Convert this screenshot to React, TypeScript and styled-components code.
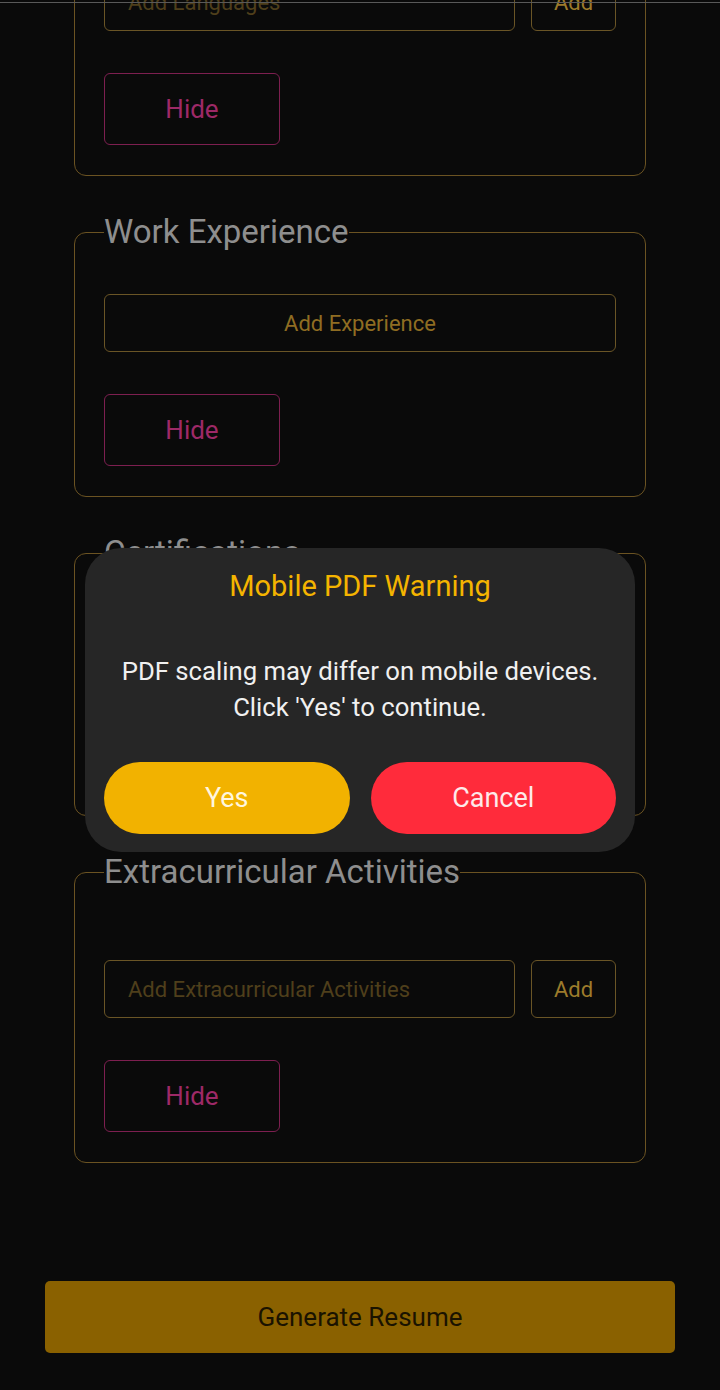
import React from "react";
import styled, { createGlobalStyle } from "styled-components";

const GlobalStyle = createGlobalStyle`
  html, body {
    margin: 0;
    padding: 0;
    background: #0a0a0a;
  }
  body {
    font-family: Roboto, "Noto Sans", "Liberation Sans", Arial, sans-serif;
    overflow: hidden;
  }
  *, *::before, *::after { box-sizing: border-box; }
`;

const TopEdge = styled.div`
  position: fixed;
  top: 2px;
  left: 0;
  right: 0;
  height: 1px;
  background: #595959;
  z-index: 5;
`;

const Page = styled.main`
  margin-top: -134px;
  padding: 0 45px 40px;
  display: flex;
  flex-direction: column;
`;

const Sections = styled.div`
  display: flex;
  flex-direction: column;
  gap: 37px;
  margin: 0 29px;
`;

const Section = styled.fieldset<{ $lead: number }>`
  margin: 0;
  min-width: 0;
  border: 1px solid #6b5322;
  border-radius: 12px;
  padding: ${(p) => p.$lead}px 29px 30px;
  display: flex;
  flex-direction: column;
  align-items: flex-start;
  gap: 42px;
`;

const Legend = styled.legend`
  padding: 0;
  margin: 0;
  font-size: 33px;
  line-height: 38px;
  color: #8e8e8e;
`;

const Row = styled.div`
  display: flex;
  gap: 16px;
  width: 100%;
`;

const TextInput = styled.input`
  flex: 1;
  min-width: 0;
  height: 58px;
  border: 1px solid #6a5526;
  border-radius: 6px;
  background: transparent;
  padding: 0 23px;
  font-family: inherit;
  font-size: 22px;
  color: #9c7b2b;
  outline: none;
  &::placeholder {
    color: #4f3f1b;
  }
`;

const OutlineButton = styled.button<{ $wide?: boolean }>`
  width: ${(p) => (p.$wide ? "100%" : "85px")};
  height: 58px;
  border: 1px solid #6a5526;
  border-radius: 6px;
  background: transparent;
  font-family: inherit;
  font-size: 22px;
  color: ${(p) => (p.$wide ? "#8f6d22" : "#9c7b2b")};
  padding: 0;
`;

const HideButton = styled.button`
  width: 176px;
  height: 72px;
  border: 1px solid #7d1f50;
  border-radius: 6px;
  background: transparent;
  font-family: inherit;
  font-size: 26px;
  color: #9e2967;
  padding: 0;
`;

const GenerateButton = styled.button`
  margin-top: 118px;
  height: 72px;
  width: 100%;
  border: none;
  border-radius: 5px;
  background: #8a6100;
  font-family: inherit;
  font-size: 26px;
  color: #1a1300;
`;

const Backdrop = styled.div`
  position: fixed;
  inset: 0;
  display: flex;
  align-items: center;
  justify-content: center;
  padding-top: 10px;
  z-index: 10;
`;

const Dialog = styled.div`
  width: 550px;
  background: #262626;
  border-radius: 36px;
  padding: 22px 19px 18px;
  text-align: center;
`;

const DialogTitle = styled.h2`
  margin: 0;
  font-size: 29px;
  line-height: 32px;
  font-weight: 400;
  color: #f4b400;
`;

const DialogText = styled.p`
  margin: 51px 0 37px;
  font-size: 25.7px;
  line-height: 36px;
  color: #f0f0f0;
`;

const Actions = styled.div`
  display: flex;
  gap: 21px;
`;

const ActionButton = styled.button<{ $variant: "confirm" | "cancel" }>`
  flex: 1;
  height: 72px;
  border: none;
  border-radius: 36px;
  font-family: inherit;
  font-size: 27px;
  background: ${(p) => (p.$variant === "confirm" ? "#f2b200" : "#ff2b3b")};
  color: ${(p) => (p.$variant === "confirm" ? "#fff6df" : "#fdeaea")};
`;

type SectionData = {
  title: string;
  lead: number;
  kind: "input" | "button";
  label: string;
};

const sections: SectionData[] = [
  { title: "Languages", lead: 69, kind: "input", label: "Add Languages" },
  { title: "Work Experience", lead: 43, kind: "button", label: "Add Experience" },
  { title: "Certifications", lead: 41, kind: "button", label: "Add Certification" },
  {
    title: "Extracurricular Activities",
    lead: 69,
    kind: "input",
    label: "Add Extracurricular Activities",
  },
];

export default function App() {
  return (
    <>
      <GlobalStyle />
      <TopEdge />
      <Page>
        <Sections>
          {sections.map((s) => (
            <Section key={s.title} $lead={s.lead}>
              <Legend>{s.title}</Legend>
              {s.kind === "input" ? (
                <Row>
                  <TextInput placeholder={s.label} />
                  <OutlineButton>Add</OutlineButton>
                </Row>
              ) : (
                <OutlineButton $wide>{s.label}</OutlineButton>
              )}
              <HideButton>Hide</HideButton>
            </Section>
          ))}
        </Sections>
        <GenerateButton>Generate Resume</GenerateButton>
      </Page>
      <Backdrop>
        <Dialog>
          <DialogTitle>Mobile PDF Warning</DialogTitle>
          <DialogText>
            PDF scaling may differ on mobile devices.
            <br />
            Click 'Yes' to continue.
          </DialogText>
          <Actions>
            <ActionButton $variant="confirm">Yes</ActionButton>
            <ActionButton $variant="cancel">Cancel</ActionButton>
          </Actions>
        </Dialog>
      </Backdrop>
    </>
  );
}
